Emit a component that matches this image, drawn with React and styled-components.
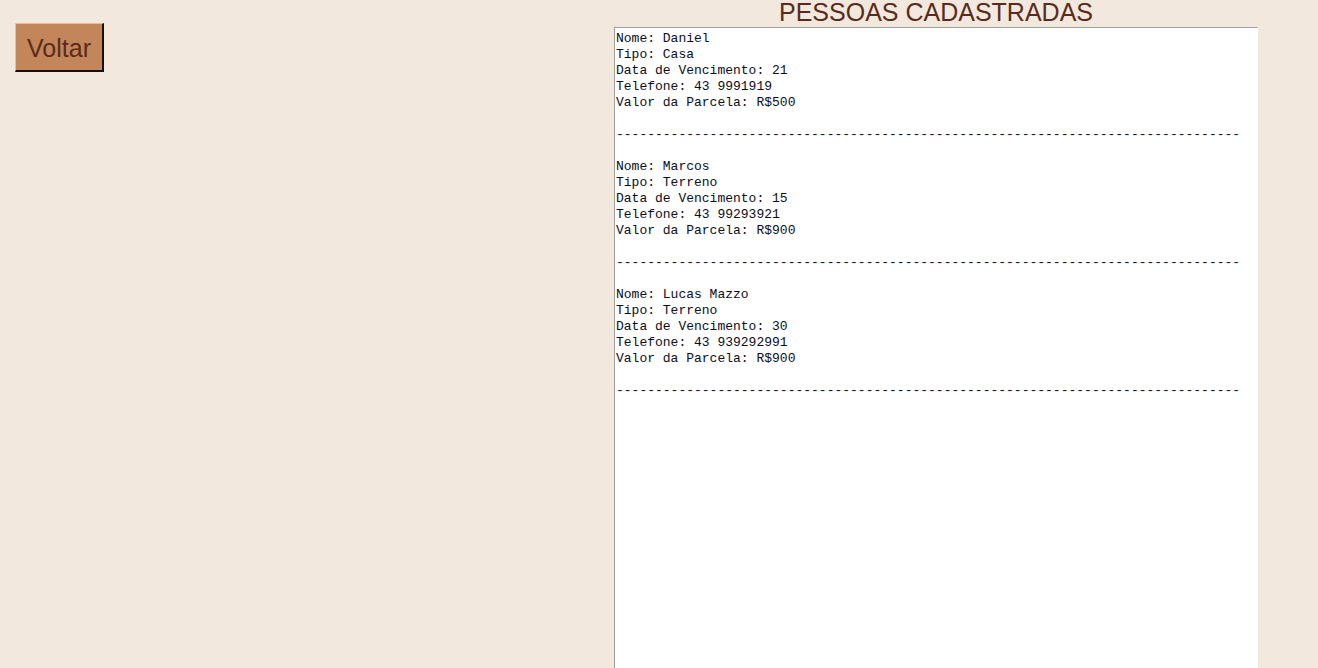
import React from "react";
import styled, { createGlobalStyle } from "styled-components";

const Global = createGlobalStyle`
  html, body {
    margin: 0;
    padding: 0;
    background: #f3e8dd;
    overflow: hidden;
  }
  body {
    font-family: "Liberation Sans", Arial, sans-serif;
  }
`;

const Page = styled.div`
  display: flex;
  align-items: flex-start;
  width: 1318px;
  height: 668px;
  overflow: hidden;
`;

const LeftCol = styled.div`
  flex: 1;
  padding: 23px 0 0 15px;
`;

const BackButton = styled.button`
  box-sizing: border-box;
  width: 89px;
  height: 49px;
  padding: 2px 0 0 0;
  background: #c3865a;
  color: #5a2b1c;
  font-family: "Liberation Sans", Arial, sans-serif;
  font-size: 25px;
  line-height: 28px;
  border-style: solid;
  border-width: 1px 2px 2px 1px;
  border-color: #f4b79b #111 #111 #f4b79b;
  cursor: pointer;
`;

const RightCol = styled.section`
  width: 644px;
  margin-right: 60px;
  display: flex;
  flex-direction: column;
`;

const Title = styled.h1`
  margin: 0 0 3px 0;
  font-family: "Liberation Sans", Arial, sans-serif;
  font-weight: normal;
  font-size: 25px;
  line-height: 24px;
  color: #5a2b1c;
  text-align: center;
`;

const ListBox = styled.div`
  box-sizing: border-box;
  height: 700px;
  background: #fff;
  border-style: solid;
  border-width: 1px;
  border-color: #a0a0a0 #fff #fff #a0a0a0;
  padding: 3px 1px;
  font-family: "Liberation Mono", "Courier New", monospace;
  font-size: 13px;
  line-height: 16px;
  color: #0c0c1c;
  white-space: pre;
`;

const people = [
  { nome: "Daniel", tipo: "Casa", venc: "21", tel: "43 9991919", valor: "R$500" },
  { nome: "Marcos", tipo: "Terreno", venc: "15", tel: "43 99293921", valor: "R$900" },
  { nome: "Lucas Mazzo", tipo: "Terreno", venc: "30", tel: "43 939292991", valor: "R$900" },
];

const dashes = "-".repeat(80);

const text = people
  .map(
    (p) =>
      `Nome: ${p.nome}\nTipo: ${p.tipo}\nData de Vencimento: ${p.venc}\nTelefone: ${p.tel}\nValor da Parcela: ${p.valor}\n\n${dashes}\n`
  )
  .join("\n");

export default function App() {
  return (
    <>
      <Global />
      <Page>
        <LeftCol>
          <BackButton>Voltar</BackButton>
        </LeftCol>
        <RightCol>
          <Title>PESSOAS CADASTRADAS</Title>
          <ListBox>{text}</ListBox>
        </RightCol>
      </Page>
    </>
  );
}
